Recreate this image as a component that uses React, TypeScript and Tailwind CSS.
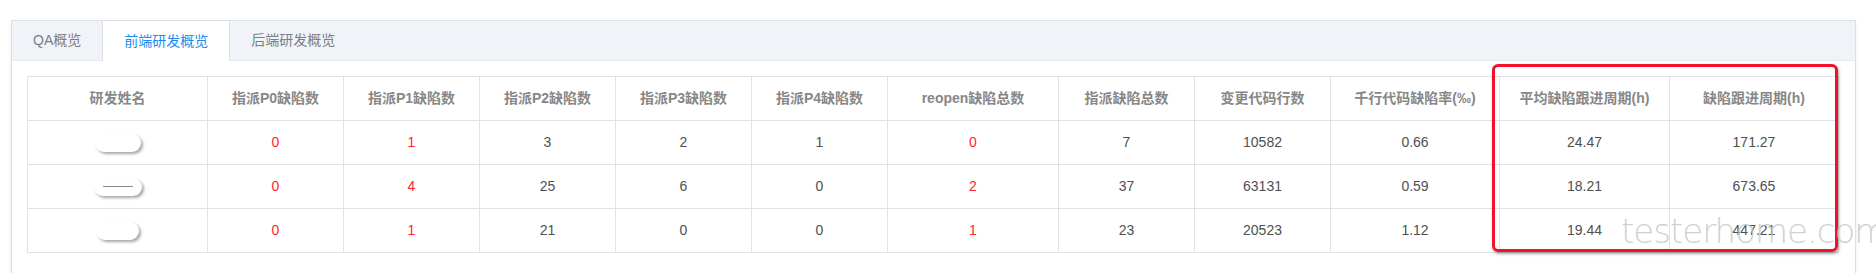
import React from 'react';

const font = { fontFamily: '"Liberation Sans", "Noto Sans CJK SC", sans-serif' };

const tabs = ['QA概览', '前端研发概览', '后端研发概览'];

const columns = [
  { title: '研发姓名', width: 180 },
  { title: '指派P0缺陷数', width: 136 },
  { title: '指派P1缺陷数', width: 136 },
  { title: '指派P2缺陷数', width: 136 },
  { title: '指派P3缺陷数', width: 136 },
  { title: '指派P4缺陷数', width: 136 },
  { title: 'reopen缺陷总数', width: 171 },
  { title: '指派缺陷总数', width: 136 },
  { title: '变更代码行数', width: 136 },
  { title: '千行代码缺陷率(‰)', width: 169 },
  { title: '平均缺陷跟进周期(h)', width: 170 },
  { title: '缺陷跟进周期(h)', width: 169 },
];

// indexes of columns drawn in red
const redCols = [1, 2, 6];

const rows = [
  { pill: 'w-[46px]', dash: false, values: ['0', '1', '3', '2', '1', '0', '7', '10582', '0.66', '24.47', '171.27'] },
  { pill: 'w-[48px]', dash: true, values: ['0', '4', '25', '6', '0', '2', '37', '63131', '0.59', '18.21', '673.65'] },
  { pill: 'w-[43px]', dash: false, values: ['0', '1', '21', '0', '0', '1', '23', '20523', '1.12', '19.44', '447.21'] },
];

const NamePill: React.FC<{ width: string; dash: boolean }> = ({ width, dash }) => (
  <div
    className={`mx-auto h-[18px] ${width} rounded-full bg-white flex items-center justify-center shadow-[2px_2px_3px_rgba(0,0,0,0.35)]`}
  >
    {dash && <div className="w-[30px] border-t border-[#8a8a8a]" />}
  </div>
);

export default function App() {
  return (
    <div className="relative w-[1876px] h-[273px] overflow-hidden bg-white" style={font}>
      <div className="ml-[11px] mt-[20px] w-[1845px] border border-[#dcdfe6] bg-white shadow-[0_2px_4px_rgba(0,0,0,0.08)]">
        {/* Tabs header */}
        <div className="flex h-[40px] bg-[#f0f3f7] border-b border-[#e4e7ed]">
          {tabs.map((t, i) =>
            i === 1 ? (
              <div
                key={t}
                className="h-[40px] -mb-px px-[21px] flex items-center bg-white border-x border-[#dcdfe6] text-[14px] text-[#1a8cf0]"
              >
                {t}
              </div>
            ) : (
              <div key={t} className="h-[39px] px-[21px] flex items-center text-[14px] text-[#7a7f87]">
                {t}
              </div>
            )
          )}
        </div>

        {/* Content */}
        <div className="pt-[15px] pl-[15px] pb-[40px]">
          <table className="table-fixed border-collapse w-[1811px] text-[14px]">
            <colgroup>
              {columns.map((c) => (
                <col key={c.title} style={{ width: c.width }} />
              ))}
            </colgroup>
            <thead>
              <tr className="h-[44px]">
                {columns.map((c) => (
                  <th key={c.title} className="border border-[#dfe3e8] font-bold text-[#878787] text-center">
                    {c.title}
                  </th>
                ))}
              </tr>
            </thead>
            <tbody>
              {rows.map((r, ri) => (
                <tr key={ri} className="h-[44px]">
                  <td className="border border-[#dfe3e8]">
                    <NamePill width={r.pill} dash={r.dash} />
                  </td>
                  {r.values.map((v, vi) => (
                    <td
                      key={vi}
                      className={`border border-[#dfe3e8] text-center ${
                        redCols.includes(vi + 1) ? 'text-[#ff1f2f]' : 'text-[#505050]'
                      }`}
                    >
                      {v}
                    </td>
                  ))}
                </tr>
              ))}
            </tbody>
          </table>
        </div>
      </div>

      {/* Red annotation box */}
      <div className="absolute left-[1492px] top-[64px] w-[346px] h-[188px] rounded-[6px] border-[3px] border-[#f5102a] shadow-[1px_2px_3px_rgba(0,0,0,0.35)] pointer-events-none" />

      {/* Watermark */}
      <div
        className="absolute left-[1621px] top-[214px] text-[34px] leading-none tracking-[-1px] text-[#c4c4c4]/80 pointer-events-none whitespace-nowrap"
        style={{ fontFamily: '"DejaVu Sans", sans-serif', fontWeight: 200 }}
      >
        testerhome.com
      </div>
    </div>
  );
}
